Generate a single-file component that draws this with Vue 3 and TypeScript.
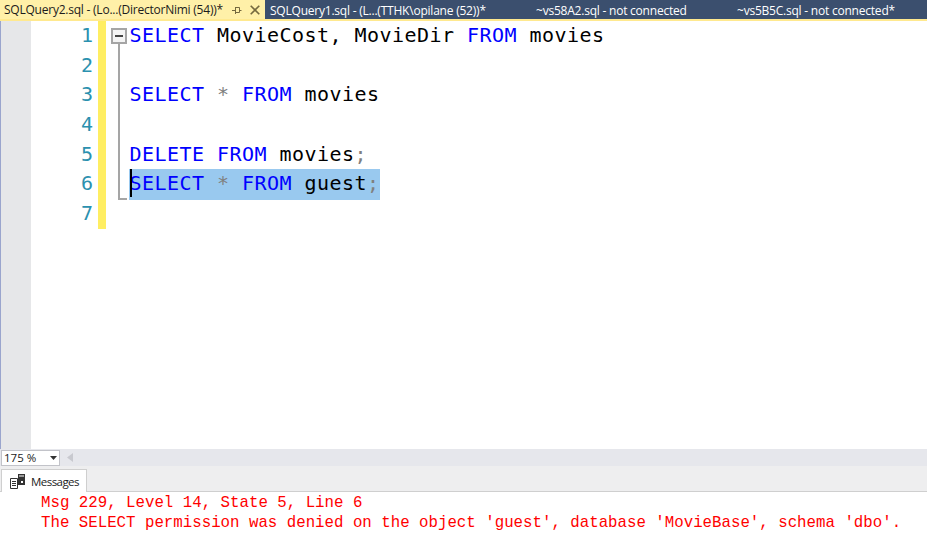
<script setup lang="ts">
interface Tok { t: string; c: string }
const k = 'kw', n = 'id', g = 'op'
const lines: Tok[][] = [
  [{ t: 'SELECT', c: k }, { t: ' MovieCost, MovieDir ', c: n }, { t: 'FROM', c: k }, { t: ' movies', c: n }],
  [],
  [{ t: 'SELECT', c: k }, { t: ' ', c: n }, { t: '*', c: g }, { t: ' ', c: n }, { t: 'FROM', c: k }, { t: ' movies', c: n }],
  [],
  [{ t: 'DELETE', c: k }, { t: ' ', c: n }, { t: 'FROM', c: k }, { t: ' movies', c: n }, { t: ';', c: g }],
  [{ t: 'SELECT', c: k }, { t: ' ', c: n }, { t: '*', c: g }, { t: ' ', c: n }, { t: 'FROM', c: k }, { t: ' guest', c: n }, { t: ';', c: g }],
  [],
]
const tabs = [
  { label: 'SQLQuery1.sql - (L...(TTHK\\opilane (52))*', w: 266 },
  { label: '~vs58A2.sql - not connected', w: 201 },
  { label: '~vs5B5C.sql - not connected*', w: 196 },
]
</script>

<template>
  <div class="page">
    <div class="tabs">
      <div class="tab active">
        <span class="tab-label">SQLQuery2.sql - (Lo...(DirectorNimi (54))*</span>
        <svg class="pin" width="10" height="8" viewBox="0 0 10 8"><path d="M0 4.5H3M3.5 1V8M3.5 1.5H7.5V6.5H3.5M7.5 4.5H9.5" fill="none" stroke="#75693f" stroke-width="1"/></svg>
        <svg class="close" width="10" height="10" viewBox="0 0 10 10"><path d="M0.7 0.7L9.3 9.3M9.3 0.7L0.7 9.3" fill="none" stroke="#75693f" stroke-width="1.6"/></svg>
      </div>
      <div v-for="t in tabs" :key="t.label" class="tab" :style="{ width: t.w + 'px' }">{{ t.label }}</div>
    </div>
    <div class="editor">
      <div class="margin"></div>
      <div class="numbers">
        <div v-for="(_, i) in lines" :key="i" class="num">{{ i + 1 }}</div>
      </div>
      <div class="change-bar"></div>
      <div class="fold">
        <div class="fold-box"><span></span></div>
        <div class="fold-line"></div>
      </div>
      <div class="code">
        <div v-for="(l, i) in lines" :key="i" class="line">
          <span :class="{ sel: i === 5 }"><span v-for="(tok, j) in l" :key="j" :class="tok.c">{{ tok.t }}</span></span>
          <i v-if="i === 5" class="caret"></i>
        </div>
      </div>
    </div>
    <div class="scroll-row">
      <div class="zoom">
        <span>175 %</span>
        <svg width="7" height="4" viewBox="0 0 7 4"><path d="M0 0H7L3.5 4Z" fill="#333"/></svg>
      </div>
      <svg class="arrow" width="6" height="9" viewBox="0 0 6 9"><path d="M6 0V9L0 4.5Z" fill="#c8c9cf"/></svg>
    </div>
    <div class="result-tabs">
      <div class="msg-tab">
        <svg width="15" height="15" viewBox="0 0 15 15">
          <path d="M0.5 4.5H7.5V14.5H0.5Z" fill="#fff" stroke="#333"/>
          <path d="M2 7.5H6M2 9.5H6M2 11.5H6" stroke="#333"/>
          <rect x="8" y="0" width="7" height="11" fill="#333"/>
          <rect x="9" y="1.5" width="5" height="1" fill="#fff"/>
          <rect x="11" y="7" width="2" height="2" fill="#fff"/>
        </svg>
        <span>Messages</span>
      </div>
    </div>
    <div class="messages">
      <div>Msg 229, Level 14, State 5, Line 6</div>
      <div>The SELECT permission was denied on the object 'guest', database 'MovieBase', schema 'dbo'.</div>
    </div>
  </div>
</template>

<style scoped>
.page {
  width: 927px;
  height: 539px;
  display: flex;
  flex-direction: column;
  overflow: hidden;
  background: #fff;
}
.tabs {
  height: 19px;
  flex: none;
  display: flex;
  background: #3b4f6e;
  border-bottom: 2px solid #ffe98f;
  font-family: "Open Sans", sans-serif;
  font-size: 12px;
  line-height: 22px;
  color: #fff;
  box-sizing: content-box;
}
.tab {
  box-sizing: border-box;
  padding-left: 5px;
  white-space: nowrap;
  overflow: hidden;
  flex: none;
}
.tab.active {
  width: 265px;
  padding-left: 4px;
  background: #fff0a8;
  color: #1c1c1c;
  display: flex;
  align-items: center;
}
.tab-label { width: 228px; letter-spacing: -0.23px; }
.close { margin-left: 8px; }
.tab:not(.active) { letter-spacing: -0.22px; }
.editor {
  height: 428px;
  flex: none;
  display: flex;
  align-items: flex-start;
}
.margin {
  width: 30px;
  height: 100%;
  flex: none;
  background: #e6e7e9;
  border-left: 1px solid #9aa5cd;
}
.numbers {
  width: 62px;
  flex: none;
  text-align: right;
}
.num, .line {
  height: 29.67px;
  line-height: 29.67px;
  font-family: "DejaVu Sans Mono", monospace;
  font-size: 20px;
}
.num { color: #2b91af; }
.change-bar {
  width: 8px;
  height: 208px;
  margin-left: 5px;
  flex: none;
  background: #ffee62;
}
.fold {
  width: 23px;
  flex: none;
  display: flex;
  flex-direction: column;
  padding: 7px 0 0 5px;
  box-sizing: border-box;
}
.fold-box {
  width: 16px;
  height: 16px;
  box-sizing: border-box;
  border: 2px solid #a5a5a5;
  background: #f4f4f4;
  display: flex;
  align-items: center;
  justify-content: center;
}
.fold-box span {
  width: 8px;
  height: 2px;
  background: #444;
}
.fold-line {
  width: 9px;
  height: 156px;
  margin-left: 7px;
  box-sizing: border-box;
  border-left: 2px solid #a5a5a5;
  border-bottom: 2px solid #a5a5a5;
}
.code {
  flex: 1;
  white-space: pre;
  letter-spacing: 0.46px;
  padding-left: 0.5px;
}
.line { position: relative; }
.kw { color: #0000ff; }
.id { color: #000; }
.op { color: #808080; }
.sel {
  display: inline-block;
  height: 31px;
  margin-left: -0.5px;
  padding-left: 0.5px;
  background: #99c9ef;
  vertical-align: top;
}
.caret {
  position: absolute;
  left: 0;
  top: 0;
  width: 2px;
  height: 28px;
  background: #000;
}
.scroll-row {
  height: 17px;
  flex: none;
  display: flex;
  align-items: center;
  background: #e6e7ec;
}
.zoom {
  width: 59px;
  height: 16px;
  margin-left: 1px;
  box-sizing: border-box;
  display: flex;
  align-items: center;
  justify-content: space-between;
  padding: 0 2px 0 2px;
  background: #fff;
  border: 1px solid #c2c3c9;
  font-family: "Open Sans", sans-serif;
  font-size: 11.5px;
  color: #1c1c1c;
}
.arrow { margin-left: 7px; }
.result-tabs {
  height: 26px;
  flex: none;
  box-sizing: border-box;
  background: #eeeeef;
  border-bottom: 1px solid #cfcfcf;
  padding-left: 1px;
  display: flex;
  align-items: flex-end;
}
.msg-tab {
  width: 86px;
  height: 23px;
  margin-bottom: -1px;
  box-sizing: border-box;
  background: #fff;
  border: 1px solid #cfcfcf;
  border-bottom: none;
  display: flex;
  align-items: center;
  gap: 6px;
  padding-left: 8px;
  font-family: "Open Sans", sans-serif;
  font-size: 11.5px;
  letter-spacing: -0.55px;
  color: #1c1c1c;
}
.messages {
  flex: 1;
  padding: 1px 0 0 41px;
  font-family: "Liberation Mono", monospace;
  font-size: 15.75px;
  line-height: 20px;
  color: #ff0000;
  white-space: pre;
}
</style>
